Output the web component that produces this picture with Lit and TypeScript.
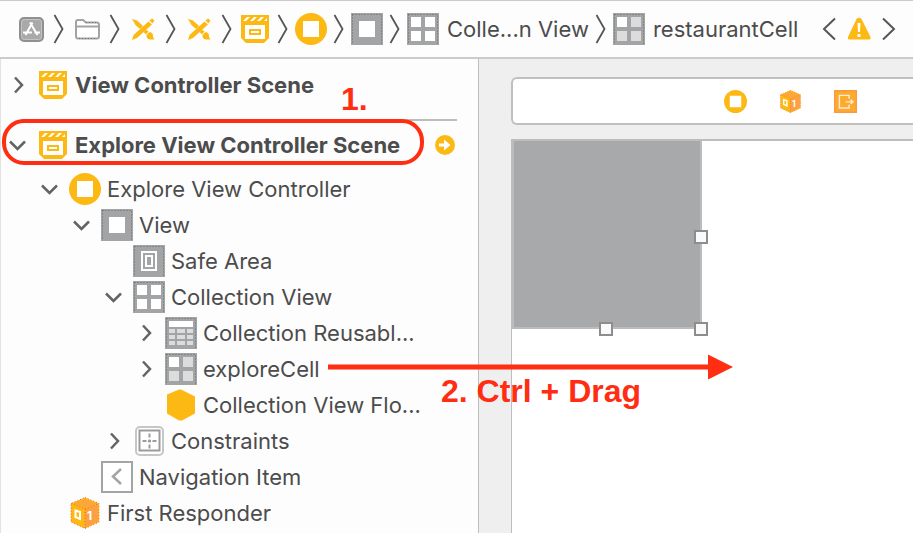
import { LitElement, html, css, svg, nothing, TemplateResult } from "lit";
import { customElement, property } from "lit/decorators.js";

type Row = { depth: number; icon: string; label: string; arrow?: "open" | "closed"; drag?: boolean };

const tree: Row[] = [
  { depth: 1, icon: "controller", label: "Explore View Controller", arrow: "open" },
  { depth: 2, icon: "view", label: "View", arrow: "open" },
  { depth: 3, icon: "safe", label: "Safe Area" },
  { depth: 3, icon: "collection", label: "Collection View", arrow: "open" },
  { depth: 4, icon: "reusable", label: "Collection Reusabl...", arrow: "closed" },
  { depth: 4, icon: "cell", label: "exploreCell", arrow: "closed", drag: true },
  { depth: 4, icon: "flow", label: "Collection View Flo..." },
  { depth: 3, icon: "constraints", label: "Constraints", arrow: "closed" },
  { depth: 2, icon: "navitem", label: "Navigation Item" },
  { depth: 1, icon: "responder", label: "First Responder" },
];

const path: { icon: string; name: string; label?: string }[] = [
  { icon: "app", name: "Project" },
  { icon: "folder", name: "Folder" },
  { icon: "storyboard", name: "Storyboard" },
  { icon: "storyboard", name: "Base storyboard" },
  { icon: "scene", name: "Scene" },
  { icon: "controller", name: "View controller" },
  { icon: "view", name: "View" },
  { icon: "collection", name: "Collection View", label: "Colle...n View" },
  { icon: "cell", name: "restaurantCell", label: "restaurantCell" },
];

const Y = "#fdb913";
const G = "#a3a4a6";
const D = "#555";

const tile = svg`<rect width="32" height="32" fill=${G}/><path d="M1.500 1.500H30.500V31M1.500 1.500V31" fill="none" stroke="#66676a" stroke-dasharray="1 2"/>`;

// Every glyph is drawn on a 32 by 32 grid.
const glyphs: Record<string, TemplateResult> = {
  app: svg`<rect x="5" y="5" width="23" height="23" rx="4" fill="#a9a9a9" stroke="#909090" stroke-width="2"/>
    <rect x="6.500" y="6.500" width="20" height="20" rx="3" fill="none" stroke="#c4c4c4"/>
    <path d="M17.500 9.500L10.500 22M15 9.500L22.500 22M8 19.500H17M19.500 19.500H25" fill="none" stroke="#fff" stroke-width="2"/>`,
  folder: svg`<path d="M5 9Q5 7 7 7H12L15 9.500H26Q28 9.500 28 12V23Q28 25.500 26 25.500H7Q5 25.500 5 23Z" fill="#fff" stroke="#a3a3a3" stroke-width="2"/>
    <path d="M6 13.500H27" stroke="#a3a3a3" stroke-width="2"/><path d="M8 25.500H26M15 9.500H26" stroke="#707070" stroke-dasharray="1 2"/>`,
  storyboard: svg`<path d="M5 27L6.500 22L21.500 8.500L25 11.500L10 25Z" fill=${Y}/><path d="M22.500 7.500L25 5.500L27.500 7.500L25.500 10.500Z" fill=${Y}/>
    <path d="M5 6L10 7.500L16 13L13 16L8.500 12Z" fill=${Y}/><path d="M16.500 19L19 16.500L21.500 18.500L19 21.500Z" fill=${Y}/>
    <path d="M19.500 22L22.500 19Q26.500 19.500 26 24L27.500 26.500H23Q19 26 19.500 22Z" fill=${Y}/>`,
  scene: svg`<path d="M2 2H30V25L25 30H7L2 25Z" fill=${Y}/>
    <path d="M4 8L8 4H11L7 8ZM11 8L15 4H18L14 8ZM18 8L22 4H25L21 8ZM25 8L28 5V8Z" fill="#fff"/>
    <path d="M6 12H26V26H6Z" fill="#fff"/><path d="M11 17H21V21H11Z" fill="none" stroke=${Y} stroke-width="2"/>`,
  controller: svg`<circle cx="16" cy="16" r="16" fill=${Y}/><rect x="8" y="8" width="16" height="16" fill="#fff"/>`,
  view: svg`${tile}<rect x="8" y="8" width="16" height="16" fill="#fff"/>`,
  safe: svg`${tile}<rect x="9" y="7" width="14" height="18" fill="none" stroke="#fff" stroke-width="2"/><rect x="13" y="11" width="6" height="10" fill="none" stroke="#fff" stroke-width="2"/>`,
  collection: svg`${tile}<path d="M4 4H14V14H4ZM18 4H28V14H18ZM4 18H14V28H4ZM18 18H28V28H18Z" fill="#fff"/>`,
  cell: svg`${tile}<path d="M4 4H14V14H4Z" fill="#fff"/><path d="M18 4H28V14H18ZM4 18H14V28H4ZM18 18H28V28H18Z" fill="#dcdcdc"/>`,
  reusable: svg`${tile}<path d="M4 4H28V10H4Z" fill="#fff"/>
    <path d="M4 12H10V16H4ZM12 12H20V16H12ZM22 12H28V16H22ZM4 18H10V22H4ZM12 18H20V22H12ZM22 18H28V22H22ZM4 24H10V28H4ZM12 24H20V28H12ZM22 24H28V28H22Z" fill="#dcdcdc"/>`,
  flow: svg`<path d="M16 0.500L30 7.500V24.500L17 31.500H14L2 24.500V5.500L14 0.500Z" fill=${Y}/>`,
  constraints: svg`<rect x="3" y="2" width="27" height="28" rx="4" fill="#fff" stroke="#c6c6c6" stroke-width="2"/>
    <rect x="6.500" y="5.500" width="20" height="20" fill="#fff" stroke="#9c9c9c" stroke-width="2"/>
    <path d="M16.500 8.500V12.500M16.500 14.500V17.500M16.500 19.500V23.500M9.500 16H13.500M15 16H18M19.500 16H23.500" stroke="#9c9c9c" stroke-width="2"/>`,
  navitem: svg`<rect x="1" y="1" width="30" height="30" fill="#fff" stroke=${G} stroke-width="2"/><path d="M20 8L12 15.500L20 23" fill="none" stroke=${G} stroke-width="2.500"/>`,
  responder: svg`<path d="M16 0.500L30 6.500V25L16 31.500L2 25V6.500Z" fill=${Y}/><path d="M4 6.500L16 2L28 6.500L16 11Z" fill="#fca63c"/>
    <path d="M16 12L29 7V24.500L16 30.500Z" fill="#fba044"/><path d="M16 0.500L30 6.500V25L16 31.500L2 25V6.500ZM2 6.500L16 12L30 6.500M16 12V31" fill="none" stroke="#f8632c" stroke-dasharray="1 2"/>
    <path d="M6.500 13.500L11 15V22L6.500 20Z" fill="none" stroke="#fff" stroke-width="2"/><text x="18" y="23" font-family="Inter, sans-serif" font-size="12" font-weight="700" fill="#fff">1</text>`,
  exit: svg`<rect width="32" height="32" fill="#fdab2c"/><rect x="1" y="1" width="30" height="30" fill="none" stroke="#fa9a3e" stroke-width="2"/>
    <path d="M21 12V7.500H7.500V25H21V20.500M16 16.500H26M23 13.500L26.500 16.500L23 19.500" fill="none" stroke="#ffe9dc" stroke-width="2"/>`,
  warning: svg`<path d="M16 5L18 6L27 24V26H5.500V24L14 6Z" fill=${Y} stroke=${Y}/><path d="M14.500 10H17.500L17 19H15ZM14.500 21H17.500V24H14.500Z" fill="#fff"/>`,
  go: svg`<circle cx="16" cy="16" r="10" fill=${Y}/><path d="M10 14.500H15V10.500L21.500 16L15 21.500V17.500H10Z" fill="#fff"/>`,
  path: svg`<path d="M11.500 2L19.500 16L11.500 30" fill="none" stroke=${D} stroke-width="1.800"/>`,
  prev: svg`<path d="M22 5.500L11 16L22 26.500" fill="none" stroke=${D} stroke-width="2"/>`,
  next: svg`<path d="M10 5.500L21 16L10 26.500" fill="none" stroke=${D} stroke-width="2"/>`,
  closed: svg`<path d="M14 8.500L21 16L14 23.500" fill="none" stroke="#636363" stroke-width="2.500"/>`,
  open: svg`<path d="M9 12.500L16.500 20L24 12.500" fill="none" stroke="#636363" stroke-width="2.500"/>`,
};

@customElement("ib-icon")
export class IbIcon extends LitElement {
  @property() name = "";
  static styles = css`
    :host { display: block; flex: none; width: 32px; height: 32px; }
    svg { display: block; width: 100%; height: 100%; overflow: visible; }
  `;
  render() {
    return html`<svg viewBox="0 0 32 32" aria-hidden="true">${glyphs[this.name]}</svg>`;
  }
}

@customElement("app-root")
export class AppRoot extends LitElement {
  static styles = css`
    :host {
      display: flex; flex-direction: column; min-height: 100vh; overflow: hidden;
      box-sizing: border-box; background: #fdfdfd; color: #4c4c4c;
      font: 22px/32px Inter, "Liberation Sans", sans-serif;
    }
    * { box-sizing: border-box; }
    button {
      display: flex; align-items: center; flex: none; margin: 0; padding: 0;
      border: 0; background: none; color: inherit; font: inherit; white-space: nowrap;
    }
    .jump {
      display: flex; align-items: center; height: 59px; padding: 0 8px 0 15px;
      border: solid #cbcbcb; border-width: 1px 0 2px;
    }
    .crumb { gap: 8px; }
    .sep { width: 24px; display: flex; justify-content: center; flex: none; }
    .issues { display: flex; align-items: center; margin-left: auto; }
    .issues .warn { width: 28px; justify-content: center; }
    .body { flex: 1; display: grid; grid-template-columns: 11fr 10fr; }
    .outline { position: relative; z-index: 1; border-left: 1px solid #e2e2e2; padding-top: 8px; min-width: 0; }
    .row { position: relative; display: flex; align-items: center; height: 36px; white-space: nowrap; }
    .row.d1 { padding-left: 32px; }
    .row.d2 { padding-left: 64px; }
    .row.d3 { padding-left: 96px; }
    .row.d4 { padding-left: 128px; }
    .twist { width: 32px; height: 32px; margin-right: 4px; }
    .label { padding-left: 6px; }
    .scene { font-weight: 700; padding-right: 17px; }
    .go { margin-left: auto; }
    .rule { height: 2px; margin: 16px 21px 6px 20px; border: 0; background: #bdbdbd; }
    .nodes { padding-top: 8px; }
    .mark { position: absolute; color: #ff2d12; font: bold 32px/36px "Liberation Sans", Arial, sans-serif; pointer-events: none; }
    .ring { left: 1px; top: -8px; width: 422px; height: 46px; border: 4px solid #ff2d12; border-radius: 22px; }
    .one { left: 340px; top: 14px; }
    .drag { left: 327px; top: 3px; width: 405px; height: 26px; }
    .two { left: 440px; top: 22px; }
    .editor { background: #efefef; border-left: 1px solid #bdbdbd; padding: 18px 0 0 32px; min-width: 0; overflow: hidden; display: flex; flex-direction: column; }
    .dock {
      display: flex; align-items: center; gap: 32px; height: 48px; padding-left: 211px; flex: none;
      background: #fff; border: 2px solid #bfbfbf; border-right: 0; border-radius: 6px 0 0 6px;
    }
    .dock ib-icon { width: 23px; height: 23px; }
    .canvas { flex: 1; margin-top: 14px; background: #fff; border: solid #bdbdbd; border-width: 2px 0 0 1px; }
    .item { position: relative; width: 190px; height: 188px; background: #a8a9ab; border: 2px solid #bcbcbe; border-top: 0; }
    .handle { position: absolute; width: 14px; height: 14px; background: #fafafa; border: 2px solid #8d8d8d; }
    .east { right: -8px; top: 89px; }
    .south { left: 85px; bottom: -9px; }
    .corner { right: -8px; bottom: -9px; }
  `;

  private scene(label: string, open: boolean) {
    return html`<div class="row scene">
      <button class="twist" aria-label="Toggle ${label}" aria-expanded=${open}><ib-icon name=${open ? "open" : "closed"}></ib-icon></button>
      <ib-icon name="scene"></ib-icon><span class="label">${label}</span>
      ${open
        ? html`<button class="go" aria-label="Go to scene"><ib-icon name="go"></ib-icon></button><div class="mark ring"></div>`
        : html`<div class="mark one">1.</div>`}
    </div>`;
  }

  private node(r: Row) {
    return html`<div class="row d${r.depth}">
      ${r.arrow
        ? html`<button class="twist" aria-label="Toggle ${r.label}" aria-expanded=${r.arrow === "open"}><ib-icon name=${r.arrow}></ib-icon></button>`
        : html`<span class="twist"></span>`}
      <ib-icon name=${r.icon}></ib-icon><span class="label">${r.label}</span>
      ${r.drag
        ? html`<svg class="mark drag" viewBox="0 0 405 26" aria-hidden="true"><path d="M0 10.500H380V0.500L405 13L380 25.500V15.500H0Z" fill="#ff2d12"/></svg>
            <div class="mark two">2. Ctrl + Drag</div>`
        : nothing}
    </div>`;
  }

  render() {
    return html`
      <nav class="jump" aria-label="Jump bar">
        ${path.map((p, i) => html`
          ${i ? html`<span class="sep"><ib-icon name="path"></ib-icon></span>` : nothing}
          <button class="crumb" aria-label=${p.name}><ib-icon name=${p.icon}></ib-icon>${p.label ? html`<span>${p.label}</span>` : nothing}</button>`)}
        <div class="issues">
          <button aria-label="Previous issue"><ib-icon name="prev"></ib-icon></button>
          <button class="warn" aria-label="Warnings"><ib-icon name="warning"></ib-icon></button>
          <button aria-label="Next issue"><ib-icon name="next"></ib-icon></button>
        </div>
      </nav>
      <div class="body">
        <section class="outline" aria-label="Document outline">
          ${this.scene("View Controller Scene", false)}
          <hr class="rule" />
          ${this.scene("Explore View Controller Scene", true)}
          <div class="nodes">${tree.map((r) => this.node(r))}</div>
        </section>
        <main class="editor">
          <div class="dock">
            <button aria-label="View controller"><ib-icon name="controller"></ib-icon></button>
            <button aria-label="First responder"><ib-icon name="responder"></ib-icon></button>
            <button aria-label="Exit"><ib-icon name="exit"></ib-icon></button>
          </div>
          <div class="canvas">
            <div class="item">
              <span class="handle east"></span><span class="handle south"></span><span class="handle corner"></span>
            </div>
          </div>
        </main>
      </div>`;
  }
}
